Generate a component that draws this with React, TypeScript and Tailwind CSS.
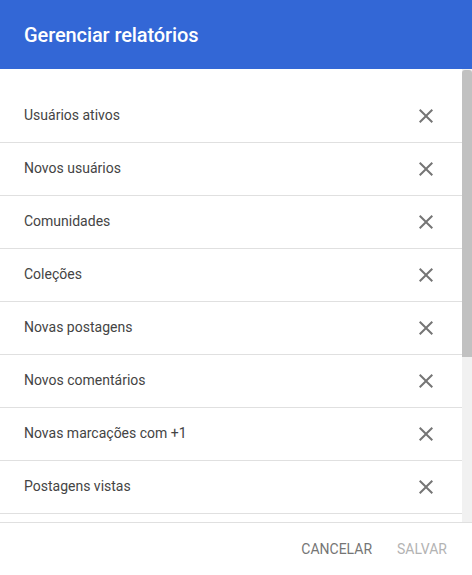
const reports = [
  "Usuários ativos",
  "Novos usuários",
  "Comunidades",
  "Coleções",
  "Novas postagens",
  "Novos comentários",
  "Novas marcações com +1",
  "Postagens vistas",
  "Compartilhamentos",
  "Novos seguidores",
  "Visualizações de perfil",
  "Enquetes respondidas",
  "Menções",
];

function CloseIcon() {
  return (
    <svg viewBox="0 0 24 24" className="w-6 h-6 fill-[#757575]">
      <path d="M19 6.41L17.59 5 12 10.59 6.41 5 5 6.41 10.59 12 5 17.59 6.41 19 12 13.41 17.59 19 19 17.59 13.41 12z" />
    </svg>
  );
}

export default function App() {
  return (
    <div className="w-[472px] h-[575px] bg-white flex flex-col overflow-hidden font-['Roboto',sans-serif]">
      <div className="h-[69px] shrink-0 bg-[#3367d6] flex items-center px-6">
        <h1 className="text-white text-[20px] font-medium tracking-[-0.1px]">Gerenciar relatórios</h1>
      </div>

      <div className="h-[453px] shrink-0 flex">
        <div className="flex-1 overflow-hidden pt-[21px]">
          {reports.map((r) => (
            <div
              key={r}
              className="h-[53px] flex items-center justify-between pl-6 pr-6 border-b border-[#e0e0e0]"
            >
              <span className="text-[14px] text-[#444] pb-[2px]">{r}</span>
              <CloseIcon />
            </div>
          ))}
        </div>
        <div className="w-[10px] bg-[#f1f1f1] pt-px">
          <div className="h-[287px] bg-[#c1c1c1] rounded-t-[3px]" />
        </div>
      </div>

      <div className="flex-1 border-t border-[#e0e0e0] flex items-center justify-end gap-[25px] pr-[25px]">
        <button className="text-[14px] text-[#757575] uppercase">
          Cancelar
        </button>
        <button className="text-[14px] text-[#b3b3b3] uppercase">
          Salvar
        </button>
      </div>
    </div>
  );
}
